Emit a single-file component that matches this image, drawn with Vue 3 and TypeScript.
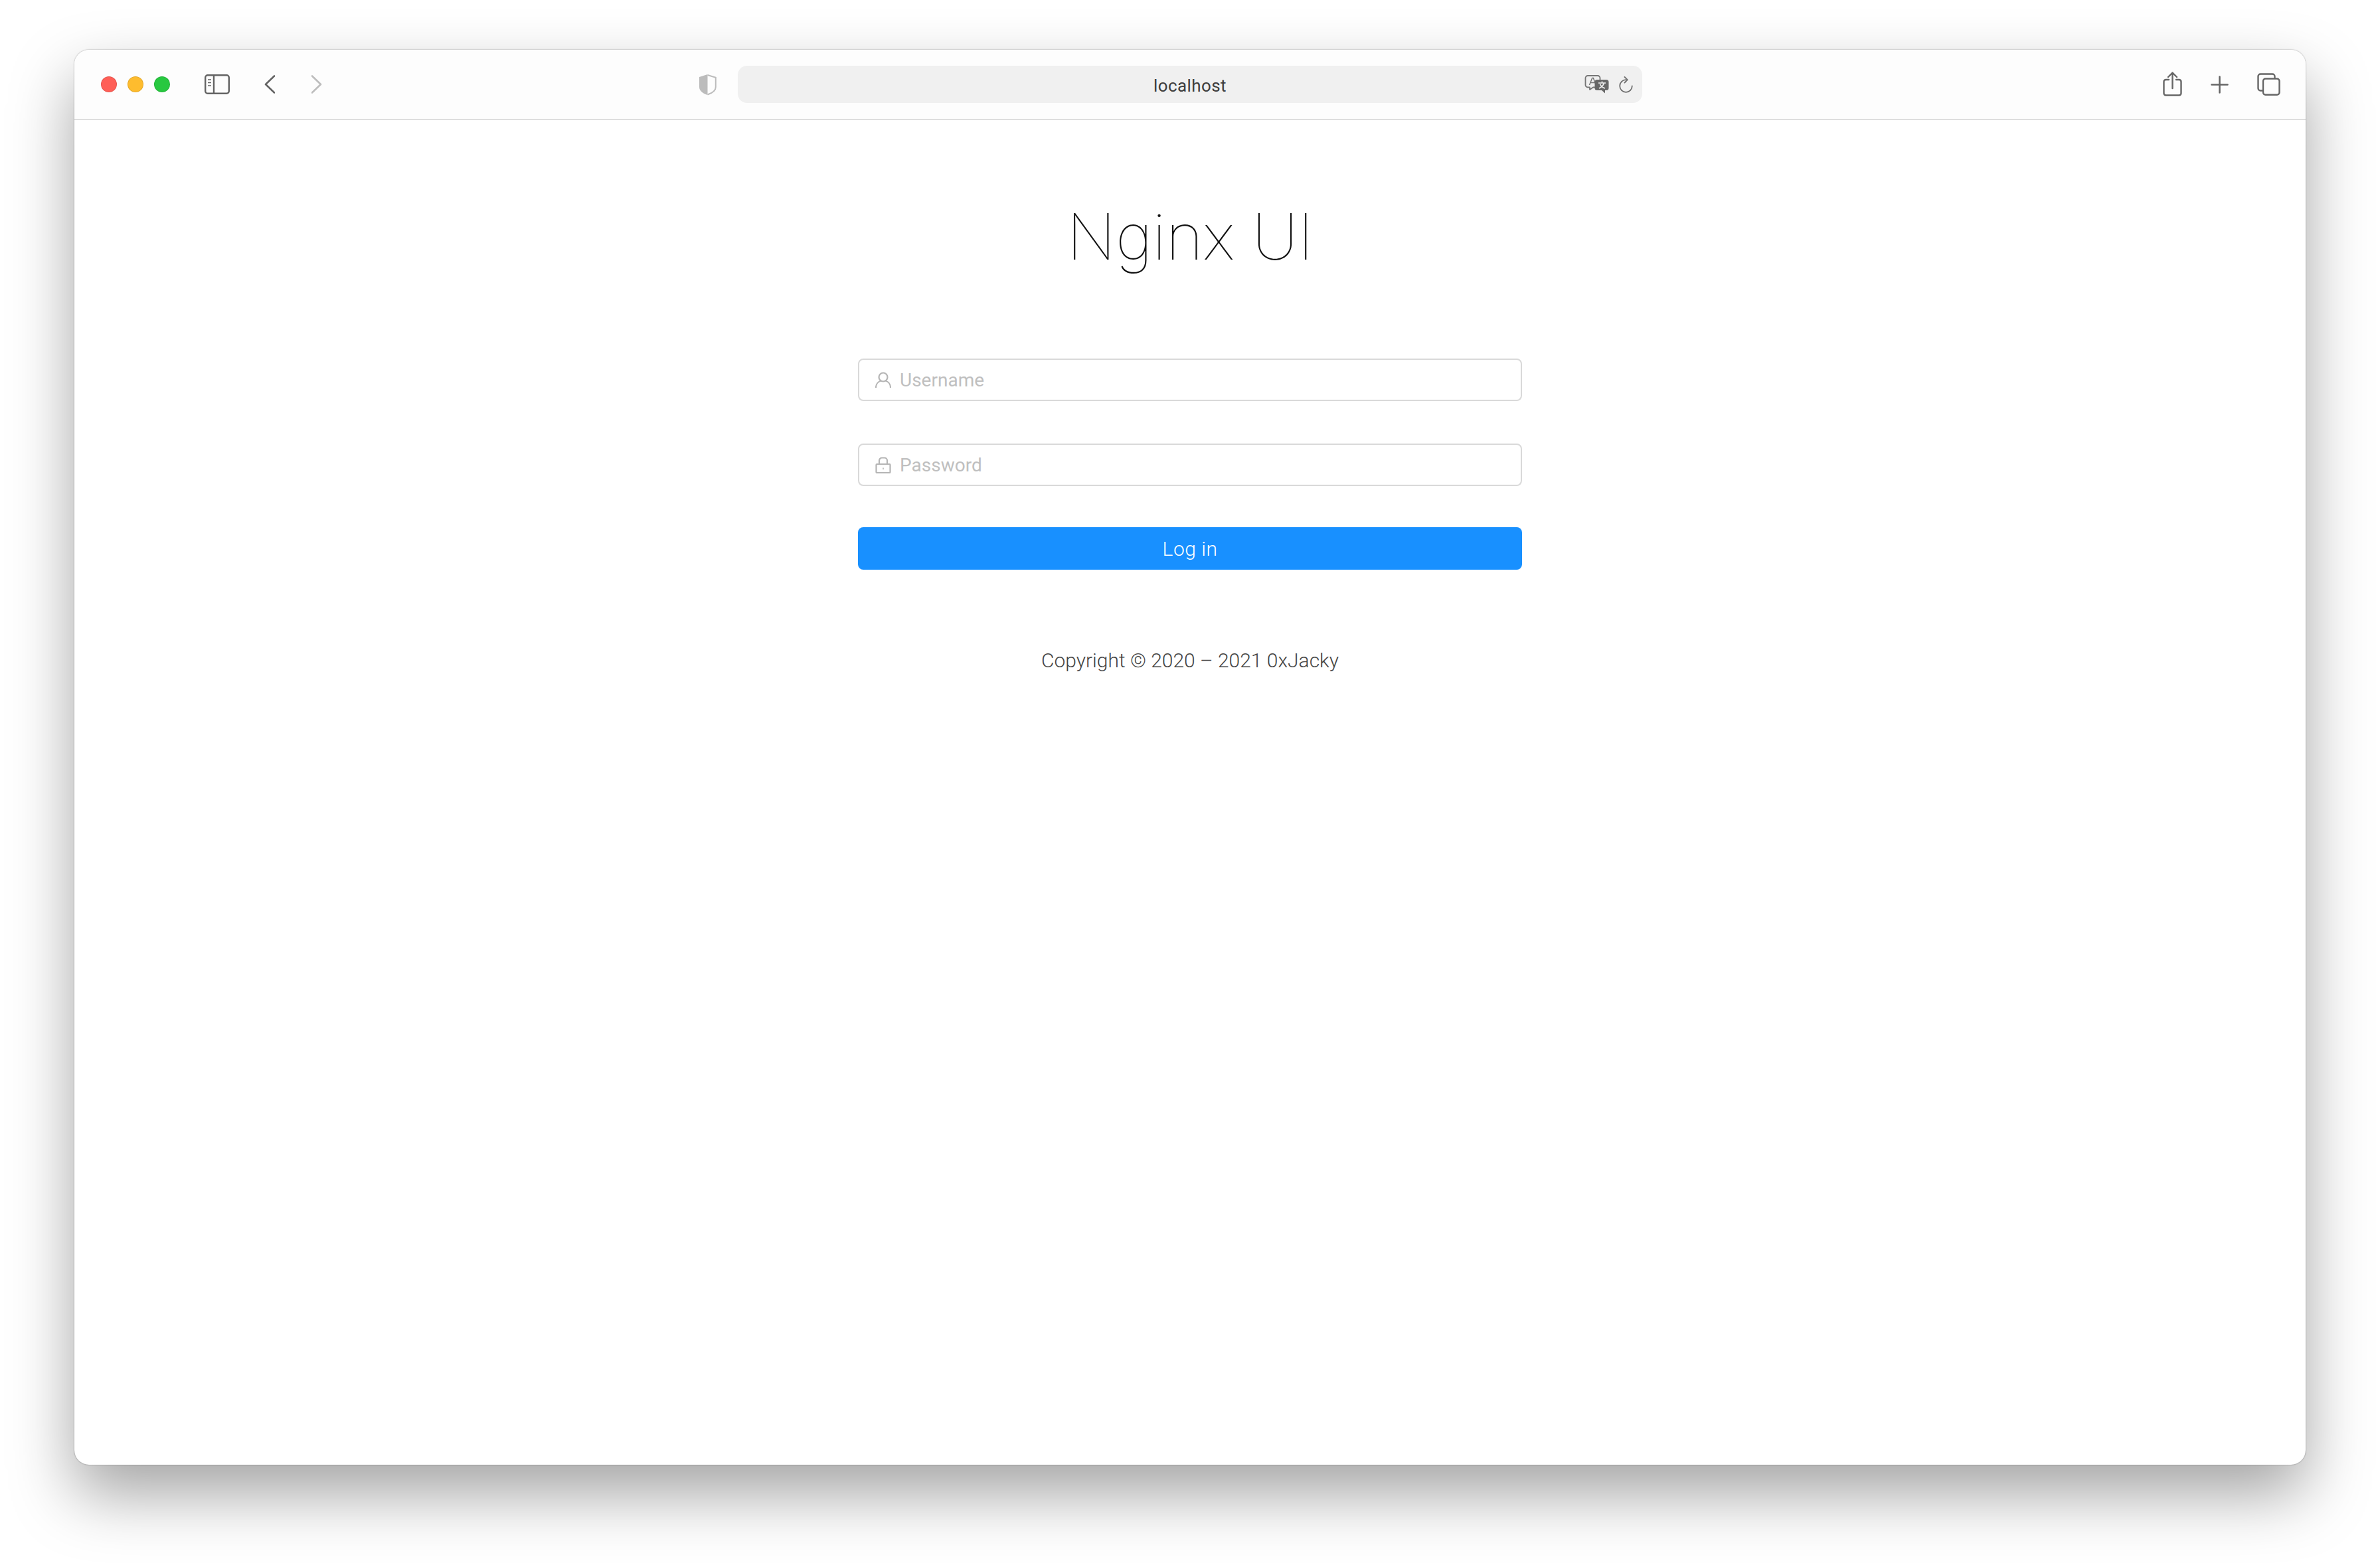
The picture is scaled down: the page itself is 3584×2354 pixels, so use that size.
<script setup lang="ts">
import { ref } from 'vue'

const username = ref('')
const password = ref('')
</script>

<template>
  <div class="stage">
    <div class="window">
      <header class="toolbar">
        <div class="lights">
          <span class="light red"></span>
          <span class="light yellow"></span>
          <span class="light green"></span>
        </div>

        <svg class="icon sidebar" width="38" height="30" viewBox="0 0 38 30" fill="none" stroke="#636363" stroke-width="2.4">
          <rect x="1.2" y="1.2" width="35.6" height="27.6" rx="3.5" />
          <path d="M14 1.2v27.6" />
          <path d="M5 8h5M5 12.5h5M5 17h5" stroke-width="1.6" />
        </svg>
        <svg class="icon back" width="16" height="28" viewBox="0 0 16 28" fill="none" stroke="#636363" stroke-width="2.6" stroke-linecap="round" stroke-linejoin="round">
          <path d="M15 1.5 2 14l13 12.5" />
        </svg>
        <svg class="icon forward" width="16" height="28" viewBox="0 0 16 28" fill="none" stroke="#bdbdbd" stroke-width="2.6" stroke-linecap="round" stroke-linejoin="round">
          <path d="M1 1.5 14 14 1 26.5" />
        </svg>

        <svg class="icon shield" width="27" height="33" viewBox="0 0 27 33" fill="none">
          <path d="M13.5 1 1 5v15c0 6 6 10 12.5 12Z" fill="#bcbcbc" />
          <path d="M13.5 2 25.8 5.800V20c0 5.500-5.500 9.300-12.300 11.500" stroke="#bcbcbc" stroke-width="2" />
        </svg>

        <div class="address">
          <span class="address-text">localhost</span>
          <svg class="icon translate" width="37" height="28" viewBox="0 0 37 28" fill="none">
            <path d="M5 1h15a3.500 3.500 0 0 1 3.500 3.500V15a3.500 3.500 0 0 1-3.500 3.500h-7L8 22v-3.500H5A3.500 3.500 0 0 1 1.500 15V4.500A3.500 3.500 0 0 1 5 1Z" fill="#f0f0f0" stroke="#757575" stroke-width="1.8" stroke-linejoin="round" />
            <path d="m7.500 15 4.200-10.500h1.600L17.500 15M9 11.500h7" stroke="#757575" stroke-width="1.500" />
            <path d="M19 7h14a3.500 3.500 0 0 1 3.500 3.500v9A3.500 3.500 0 0 1 33 23h-2v4.500L26 23h-7a3.500 3.500 0 0 1-3.500-3.500v-9A3.500 3.500 0 0 1 19 7Z" fill="#676767" />
            <path d="M21 12h11M26.500 9.500V12M29.500 12c-1 4-4.500 6.500-7.500 8M23.500 13.500c1 3 4 5.500 7.500 6.500" stroke="#f0f0f0" stroke-width="1.600" />
          </svg>
          <svg class="icon reload" width="21" height="25" viewBox="0 0 21 25" fill="none" stroke="#6f6f6f" stroke-width="1.800" stroke-linecap="round" stroke-linejoin="round">
            <path d="M10.500 5.200a9.300 9.300 0 1 0 9.300 9.300" />
            <path d="m8.500 1 4.300 4.200-4.300 4.300" />
          </svg>
        </div>

        <svg class="icon share" width="29" height="37" viewBox="0 0 29 37" fill="none" stroke="#666" stroke-width="2.400" stroke-linecap="round" stroke-linejoin="round">
          <path d="M9 12H4.500a3 3 0 0 0-3 3v17.500a3 3 0 0 0 3 3h20a3 3 0 0 0 3-3V15a3 3 0 0 0-3-3H20" />
          <path d="M14.500 25V1.500M8 8l6.500-6.500L21 8" />
        </svg>
        <svg class="icon plus" width="27" height="27" viewBox="0 0 27 27" fill="none" stroke="#666" stroke-width="2.600" stroke-linecap="round">
          <path d="M13.500 1.500v24M1.500 13.500h24" />
        </svg>
        <svg class="icon tabs" width="35" height="34" viewBox="0 0 35 34" fill="none" stroke="#666" stroke-width="2.400">
          <path d="M26.500 8V5a3.500 3.500 0 0 0-3.500-3.500H5A3.500 3.500 0 0 0 1.500 5v18A3.500 3.500 0 0 0 5 26.500h3" />
          <rect x="9" y="8.500" width="24.500" height="24.300" rx="3.500" />
        </svg>
      </header>

      <main class="page">
        <h1 class="title">Nginx UI</h1>

        <form class="login" @submit.prevent>
          <label class="field">
            <svg class="field-icon" width="24" height="24" viewBox="0 0 24 24" fill="none" stroke="#b5b5b5" stroke-width="2.200">
              <circle cx="12" cy="8" r="6.500" />
              <path d="M1 24c0-6 4-9.500 7.500-10.500M23 24c0-6-4-9.500-7.500-10.500" />
            </svg>
            <input v-model="username" class="input" type="text" placeholder="Username" />
          </label>

          <label class="field">
            <svg class="field-icon" width="24" height="26" viewBox="0 0 24 26" fill="none" stroke="#b5b5b5" stroke-width="2.200">
              <rect x="1.500" y="12" width="21" height="13" rx="1" />
              <path d="M6 12V6.500a4 4 0 0 1 4-4h4a4 4 0 0 1 4 4V12" />
              <path d="M12 17.500v2.500" stroke-width="1.600" />
            </svg>
            <input v-model="password" class="input" type="password" placeholder="Password" />
          </label>

          <button class="submit" type="submit">Log in</button>
        </form>

        <footer class="copyright">Copyright © 2020 – 2021 0xJacky</footer>
      </main>
    </div>
  </div>
</template>

<style>
html,
body {
  margin: 0;
  background: #fff;
}
</style>

<style scoped>
.stage {
  box-sizing: border-box;
  width: 3584px;
  height: 2354px;
  padding: 75px 112px 148px;
  overflow: hidden;
  font-family: Roboto, "Liberation Sans", sans-serif;
}

.window {
  display: flex;
  flex-direction: column;
  height: 100%;
  background: #fff;
  border-radius: 22px;
  box-shadow:
    0 0 2px rgba(0, 0, 0, 0.45),
    0 44px 96px rgba(0, 0, 0, 0.36);
}

.toolbar {
  display: flex;
  flex: none;
  align-items: center;
  box-sizing: border-box;
  height: 106px;
  padding-left: 40px;
  background: #fdfdfd;
  border-bottom: 2px solid #dedede;
  border-radius: 22px 22px 0 0;
}

.lights {
  display: flex;
  gap: 16px;
}

.light {
  box-sizing: border-box;
  width: 24px;
  height: 24px;
  border-radius: 50%;
  border: 1px solid rgba(0, 0, 0, 0.1);
}

.red { background: #ff5f57; }
.yellow { background: #febc2e; }
.green { background: #28c840; }

.icon {
  display: block;
  flex: none;
}

.sidebar { margin-left: 52px; }
.back { margin-left: 52px; }
.forward { margin-left: 55px; }
.shield { margin-left: 567px; }

.address {
  position: relative;
  display: flex;
  flex: none;
  align-items: center;
  justify-content: flex-end;
  box-sizing: border-box;
  width: 1362px;
  height: 56px;
  margin-left: 32px;
  padding-right: 14px;
  background: #f0f0f0;
  border-radius: 14px;
}

.address-text {
  position: absolute;
  left: 0;
  right: 0;
  top: 2px;
  text-align: center;
  font-size: 26px;
  letter-spacing: 0.4px;
  line-height: 56px;
  color: #3d3d3d;
}

.translate { margin-right: 15px; }
.share { margin-left: 784px; margin-top: -1px; }
.plus { margin-left: 43px; }
.tabs { margin-left: 43px; }

.page {
  display: flex;
  flex: 1;
  flex-direction: column;
  align-items: center;
}

.title {
  margin: 115px 0 0;
  font-family: Inter, "Liberation Sans", sans-serif;
  font-size: 96px;
  font-weight: 100;
  line-height: 120px;
  letter-spacing: -0.4px;
  color: #111;
}

.login {
  display: flex;
  flex-direction: column;
  width: 1000px;
  margin-top: 124px;
}

.field {
  display: flex;
  align-items: center;
  gap: 13px;
  box-sizing: border-box;
  height: 64px;
  margin-bottom: 64px;
  padding: 0 24px;
  background: #fff;
  border: 2px solid #d9d9d9;
  border-radius: 8px;
}

.field-icon {
  flex: none;
}

.input {
  flex: 1;
  min-width: 0;
  padding: 0;
  border: 0;
  outline: 0;
  background: transparent;
  font-family: inherit;
  font-size: 28px;
  font-weight: 400;
  color: #595959;
}

.input::placeholder {
  color: #bfbfbf;
  opacity: 1;
}

.submit {
  height: 64px;
  margin-top: -2px;
  padding: 0;
  border: 0;
  border-radius: 8px;
  background: #1890ff;
  color: #fff;
  font-family: inherit;
  font-size: 30px;
  font-weight: 300;
  letter-spacing: 0.5px;
  cursor: pointer;
}

.copyright {
  margin-top: 119px;
  font-size: 30px;
  font-weight: 300;
  line-height: 36px;
  color: #444;
}
</style>
